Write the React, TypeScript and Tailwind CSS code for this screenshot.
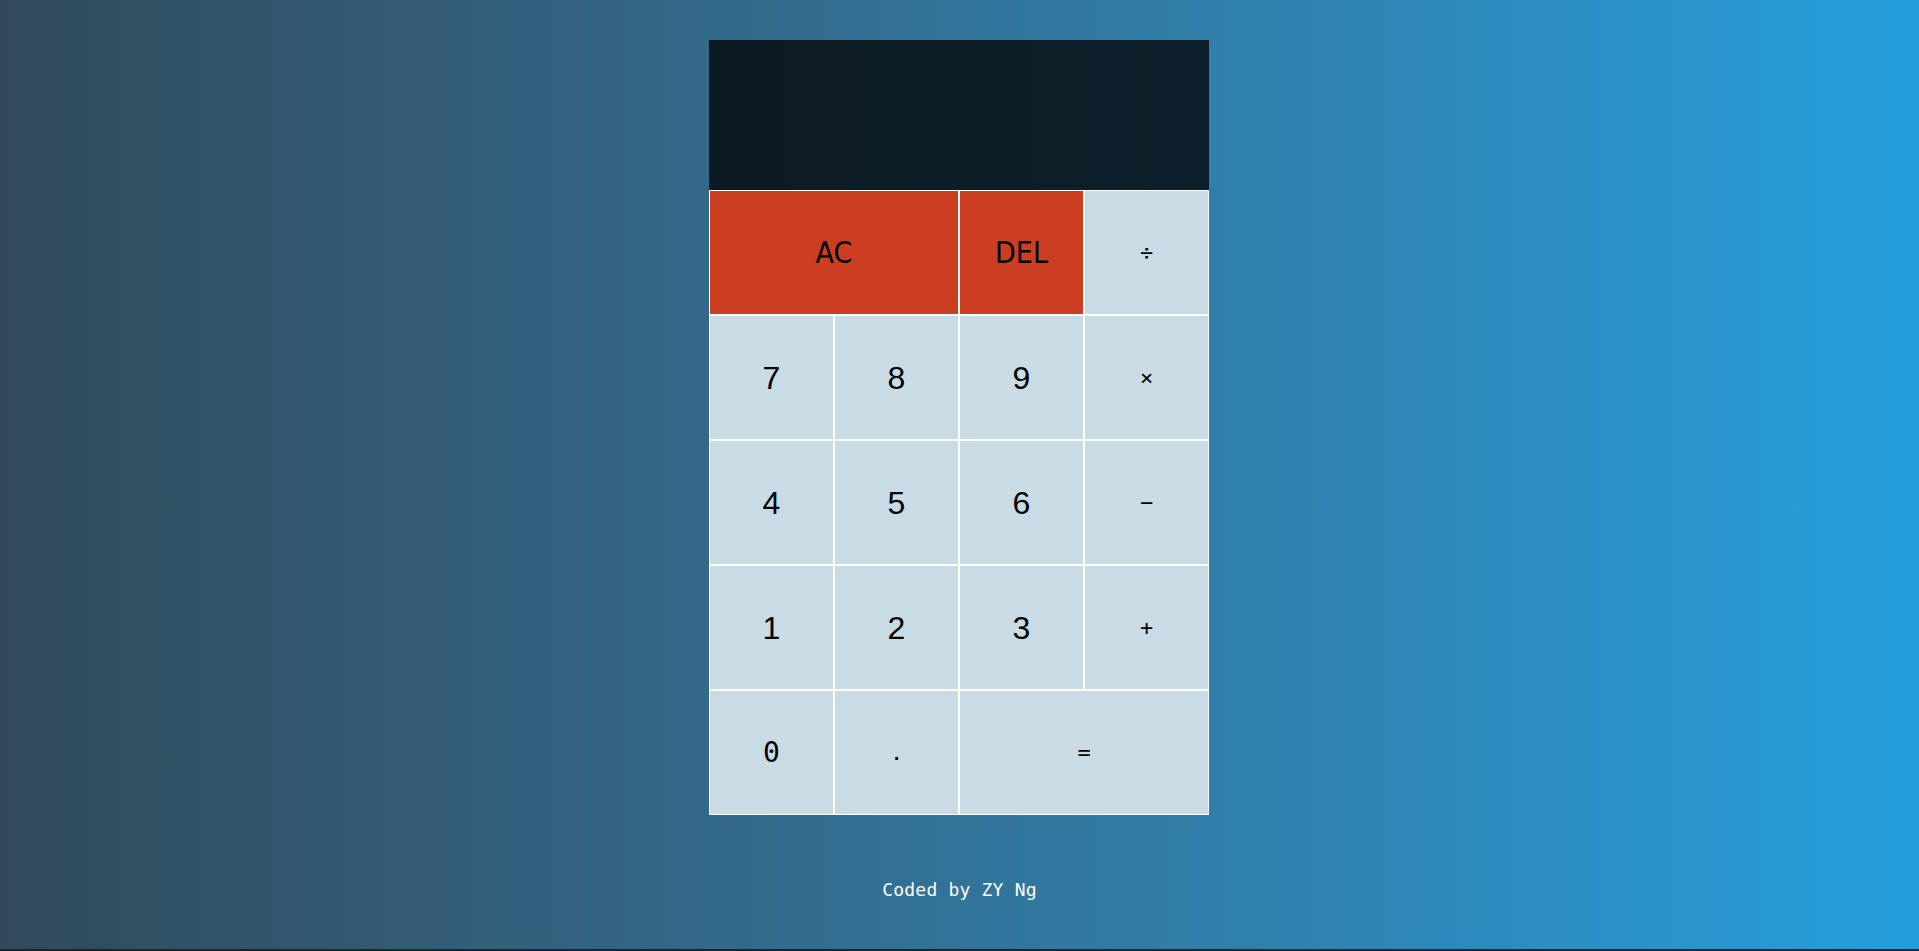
import React from "react";

const mono = { fontFamily: '"DejaVu Sans Mono", "Liberation Mono", monospace' };
const sans = { fontFamily: '"Liberation Sans", Roboto, Arial, sans-serif' };
const narrow = {
  fontFamily: '"Liberation Sans Narrow", "DejaVu Sans Condensed", "DejaVu Sans", sans-serif',
  fontStretch: "condensed" as const,
};

type Btn = { label: string; kind: "digit" | "op" | "red" | "mono"; span?: boolean };

const buttons: Btn[] = [
  { label: "AC", kind: "red", span: true },
  { label: "DEL", kind: "red" },
  { label: "÷", kind: "op" },
  { label: "7", kind: "digit" },
  { label: "8", kind: "digit" },
  { label: "9", kind: "digit" },
  { label: "×", kind: "op" },
  { label: "4", kind: "digit" },
  { label: "5", kind: "digit" },
  { label: "6", kind: "digit" },
  { label: "−", kind: "op" },
  { label: "1", kind: "digit" },
  { label: "2", kind: "digit" },
  { label: "3", kind: "digit" },
  { label: "+", kind: "op" },
  { label: "0", kind: "mono" },
  { label: ".", kind: "op" },
  { label: "=", kind: "op", span: true },
];

export default function App() {
  return (
    <div className="w-full">
      <div className="h-[949px] w-full bg-gradient-to-r from-[#304a5b] to-[#249fdc] flex flex-col items-center pt-[40px]">
        <div className="w-[500px] mr-[1px] grid grid-cols-4 grid-rows-[150px_repeat(5,125px)]">
          <div className="col-span-4 bg-black/75" />
          {buttons.map((b, i) => {
            const bg = b.kind === "red" ? "bg-[#cb3e21]" : "bg-[#c9dce6]";
            const span = b.span ? "col-span-2" : "";
            let style: React.CSSProperties = sans;
            let size = "text-[32px]";
            if (b.kind === "red") {
              style = narrow;
              size = "text-[30px]";
            } else if (b.kind === "op") {
              style = mono;
              size = "text-[22px]";
            } else if (b.kind === "mono") {
              style = mono;
              size = "text-[28px]";
            }
            return (
              <button
                key={i}
                className={`${bg} ${span} ${size} border border-white text-black flex items-center justify-center leading-none font-normal`}
                style={style}
              >
                <span style={style}>{b.label}</span>
              </button>
            );
          })}
        </div>
        <div className="mt-[64px] text-white text-[18px] leading-[21px] tracking-[0.2px]" style={mono}>
          Coded by ZY Ng
        </div>
      </div>
      <div className="h-[2px] w-full bg-[#1d2529]" />
    </div>
  );
}
